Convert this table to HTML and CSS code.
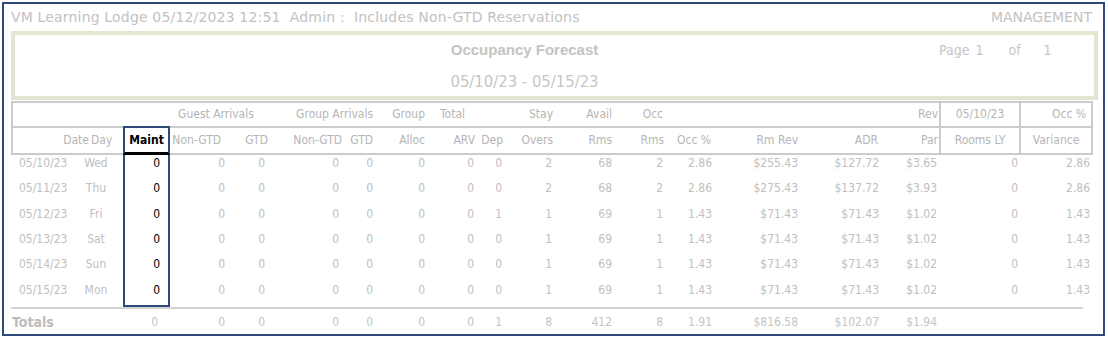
FILE: index.html
```html
<!DOCTYPE html>
<html>
<head>
<meta charset="utf-8">
<link rel="stylesheet" href="styles.css">
</head>
<body>
<div class="frame">
  <div class="topline">
    <span class="lodge">VM Learning Lodge 05/12/2023 12:51  Admin :  Includes Non-GTD Reservations</span>
    <span class="mgmt">MANAGEMENT</span>
  </div>
  <div class="titlebox">
    <div class="tline">
      <div></div>
      <div class="ttl">Occupancy Forecast</div>
      <div class="page"><span>Page</span><span class="p1">1</span><span class="pof">of</span><span class="p2">1</span></div>
    </div>
    <div class="tline dline">
      <div></div>
      <div class="range">05/10/23 - 05/15/23</div>
      <div></div>
    </div>
  </div>
  <table class="rpt">
    <colgroup>
      <col class="w69"><col class="w43"><col class="w47"><col class="w55"><col class="w43">
      <col class="w74"><col class="w31"><col class="w53"><col class="w49"><col class="w28">
      <col class="w50"><col class="w59"><col class="w52"><col class="w48"><col class="w86">
      <col class="w81"><col class="w60"><col class="w80"><col class="w74">
    </colgroup>
    <thead>
      <tr class="h1">
        <td colspan="3" class="bl"></td>
        <td colspan="2" class="l gA">Guest Arrivals</td>
        <td colspan="2" class="r">Group Arrivals</td>
        <td class="r p1r">Group</td>
        <td class="l tot">Total</td>
        <td></td>
        <td class="r">Stay</td>
        <td class="r">Avail</td>
        <td class="r p1r">Occ</td>
        <td colspan="3"></td>
        <td class="r p1r">Rev</td>
        <td class="c bl">05/10/23</td>
        <td class="r bl br occv">Occ %</td>
      </tr>
      <tr class="h2">
        <td colspan="2" class="bl"><div class="dd"><span class="dt">Date</span><span class="dy">Day</span></div></td>
        <td class="c maint">Maint</td>
        <td class="r p4r">Non-GTD</td>
        <td class="r">GTD</td>
        <td class="r">Non-GTD</td>
        <td class="r">GTD</td>
        <td class="r p1r">Alloc</td>
        <td class="r">ARV</td>
        <td class="r">Dep</td>
        <td class="r">Overs</td>
        <td class="r">Rms</td>
        <td class="r">Rms</td>
        <td class="r p1r">Occ %</td>
        <td class="r">Rm Rev</td>
        <td class="r p1r">ADR</td>
        <td class="r p1r">Par</td>
        <td class="c bl">Rooms LY</td>
        <td class="c bl br">Variance</td>
      </tr>
    </thead>
    <tbody>
      <tr class="row">
        <td class="date">05/10/23</td><td class="day">Wed</td><td class="mv">0</td>
        <td class="r">0</td><td class="r p3r">0</td><td class="r p3r">0</td><td class="r">0</td><td class="r p1r">0</td><td class="r p1r">0</td><td class="r p1r">0</td>
        <td class="r p1r">2</td><td class="r">68</td><td class="r p1r">2</td><td class="r">2.86</td><td class="r">$255.43</td><td class="r">$127.72</td><td class="r p2r">$3.65</td><td class="r p1r">0</td><td class="r p3r">2.86</td>
      </tr>
      <tr class="row">
        <td class="date">05/11/23</td><td class="day">Thu</td><td class="mv">0</td>
        <td class="r">0</td><td class="r p3r">0</td><td class="r p3r">0</td><td class="r">0</td><td class="r p1r">0</td><td class="r p1r">0</td><td class="r p1r">0</td>
        <td class="r p1r">2</td><td class="r">68</td><td class="r p1r">2</td><td class="r">2.86</td><td class="r">$275.43</td><td class="r">$137.72</td><td class="r p2r">$3.93</td><td class="r p1r">0</td><td class="r p3r">2.86</td>
      </tr>
      <tr class="row">
        <td class="date">05/12/23</td><td class="day">Fri</td><td class="mv">0</td>
        <td class="r">0</td><td class="r p3r">0</td><td class="r p3r">0</td><td class="r">0</td><td class="r p1r">0</td><td class="r p1r">0</td><td class="r p1r">1</td>
        <td class="r p1r">1</td><td class="r">69</td><td class="r p1r">1</td><td class="r">1.43</td><td class="r">$71.43</td><td class="r">$71.43</td><td class="r p2r">$1.02</td><td class="r p1r">0</td><td class="r p3r">1.43</td>
      </tr>
      <tr class="row">
        <td class="date">05/13/23</td><td class="day">Sat</td><td class="mv">0</td>
        <td class="r">0</td><td class="r p3r">0</td><td class="r p3r">0</td><td class="r">0</td><td class="r p1r">0</td><td class="r p1r">0</td><td class="r p1r">0</td>
        <td class="r p1r">1</td><td class="r">69</td><td class="r p1r">1</td><td class="r">1.43</td><td class="r">$71.43</td><td class="r">$71.43</td><td class="r p2r">$1.02</td><td class="r p1r">0</td><td class="r p3r">1.43</td>
      </tr>
      <tr class="row">
        <td class="date">05/14/23</td><td class="day">Sun</td><td class="mv">0</td>
        <td class="r">0</td><td class="r p3r">0</td><td class="r p3r">0</td><td class="r">0</td><td class="r p1r">0</td><td class="r p1r">0</td><td class="r p1r">0</td>
        <td class="r p1r">1</td><td class="r">69</td><td class="r p1r">1</td><td class="r">1.43</td><td class="r">$71.43</td><td class="r">$71.43</td><td class="r p2r">$1.02</td><td class="r p1r">0</td><td class="r p3r">1.43</td>
      </tr>
      <tr class="row last">
        <td class="date">05/15/23</td><td class="day">Mon</td><td class="mv">0</td>
        <td class="r">0</td><td class="r p3r">0</td><td class="r p3r">0</td><td class="r">0</td><td class="r p1r">0</td><td class="r p1r">0</td><td class="r p1r">0</td>
        <td class="r p1r">1</td><td class="r">69</td><td class="r p1r">1</td><td class="r">1.43</td><td class="r">$71.43</td><td class="r">$71.43</td><td class="r p2r">$1.02</td><td class="r p1r">0</td><td class="r p3r">1.43</td>
      </tr>
      <tr class="totals">
        <td colspan="2" class="tl">Totals</td><td class="r mt">0</td>
        <td class="r">0</td><td class="r p3r">0</td><td class="r p3r">0</td><td class="r">0</td><td class="r p1r">0</td><td class="r p1r">0</td><td class="r p1r">1</td>
        <td class="r p1r">8</td><td class="r">412</td><td class="r p1r">8</td><td class="r">1.91</td><td class="r">$816.58</td><td class="r">$102.07</td><td class="r p2r">$1.94</td><td></td><td class="nol"></td>
      </tr>
    </tbody>
  </table>
</div>
</body>
</html>
```

FILE: styles.css
```css
* { box-sizing: border-box; }
html, body { margin: 0; padding: 0; background: #fff; }
body {
  padding: 2px;
  font-family: "DejaVu Sans Condensed", "DejaVu Sans", sans-serif;
  font-stretch: condensed;
  color: #bdbdbd;
}
.frame {
  width: 1103px;
  height: 334px;
  border: 2px solid #2d4a7b;
  overflow: hidden;
}
.topline {
  display: flex;
  justify-content: space-between;
  padding: 3px 11px 4px 7px;
  font-family: "DejaVu Sans", sans-serif;
  font-stretch: normal;
  font-size: 14px;
  line-height: 20px;
  color: #c2c2c2;
}
.lodge { white-space: pre; letter-spacing: 0.17px; }
.titlebox {
  margin: 0 5px 0 7px;
  height: 69px;
  border: 4px solid #e5e5d3;
  padding-top: 5px;
}
.tline {
  display: grid;
  grid-template-columns: 420px 179px 1fr;
  height: 20px;
  line-height: 20px;
}
.dline { margin-top: 12px; }
.ttl {
  font-family: "Liberation Sans", Arial, sans-serif;
  font-weight: bold;
  font-size: 15px;
  text-align: center;
  white-space: nowrap;
  color: #c4c4c4;
}
.range {
  text-align: center;
  white-space: nowrap;
  font-size: 16.5px;
  color: #c6c6c6;
}
.page {
  padding-left: 325px;
  font-size: 14px;
  white-space: nowrap;
  color: #c6c6c6;
}
.page .p1 { margin-left: 6px; }
.page .pof { margin-left: 25px; }
.page .p2 { margin-left: 23px; }

.w28 { width: 28px; } .w31 { width: 31px; } .w43 { width: 43px; } .w47 { width: 47px; }
.w48 { width: 48px; } .w49 { width: 49px; } .w50 { width: 50px; } .w52 { width: 52px; }
.w53 { width: 53px; } .w55 { width: 55px; } .w59 { width: 59px; } .w60 { width: 60px; }
.w69 { width: 69px; } .w74 { width: 74px; } .w80 { width: 80px; } .w81 { width: 81px; }
.w86 { width: 86px; }

.rpt {
  margin: 1px 0 0 7px;
  width: 1082px;
  table-layout: fixed;
  border-collapse: separate;
  border-spacing: 0;
  font-size: 12px;
  line-height: 14px;
}
.rpt td { padding: 0; white-space: nowrap; overflow: visible; }
.r { text-align: right; }
.l { text-align: left; }
.c { text-align: center; }
.p1r { padding-right: 1px !important; }
.p2r { padding-right: 2px !important; }
.p3r { padding-right: 3px !important; }
.p4r { padding-right: 4px !important; }

.h1 td {
  border-top: 2px solid #cbcbcb;
  padding: 4px 0 5px;
  color: #b5b5b5;
}
.h2 td {
  border-top: 2px solid #cbcbcb;
  border-bottom: 2px solid #cbcbcb;
  padding: 5px 0 6px;
  color: #b5b5b5;
}
.bl { border-left: 2px solid #cbcbcb; }
.br { border-right: 2px solid #cbcbcb; }
.gA { padding-left: 8px !important; }
.tot { padding-left: 14px !important; }
.occv { padding-right: 5px !important; }
.dd { display: flex; }
.dt { width: 76px; text-align: right; }
.dy { margin-left: 2px; }
.h2 td.maint {
  border-top: 2px solid #2d4a7b;
  border-left: 2px solid #2d4a7b;
  border-right: 2px solid #2d4a7b;
  border-bottom: 3px solid #000;
  padding: 5px 0 5px;
  color: #000;
  font-weight: bold;
}

.row td {
  padding: 1px 0 10.33px;
  color: #c0c0c0;
  vertical-align: top;
}
.row td.date { padding-left: 8px; }
.row td.day { text-align: center; padding-right: 11px; }
.row td.mv {
  text-align: right;
  padding-right: 8px;
  color: #000;
  border-left: 2px solid #2d4a7b;
  border-right: 2px solid #2d4a7b;
}
.row.last td { padding-bottom: 8.33px; border-bottom: 2px solid transparent; }
.row.last td.mv { border-bottom: 2px solid #2d4a7b; }

.totals td {
  border-top: 2px solid #d3d3d3;
  padding: 4px 0 3px;
  line-height: 18px;
  color: #c4c4c4;
}
.totals td.nol {
  border-top-color: transparent;
  background-image: linear-gradient(#d3d3d3, #d3d3d3);
  background-repeat: no-repeat;
  background-origin: border-box;
  background-position: 0 0;
  background-size: 64px 2px;
}
.totals td.tl {
  padding-left: 1px;
  font-weight: bold;
  font-size: 14px;
  color: #bcbcbc;
}
.totals td.mt { padding-right: 12px; }
```
